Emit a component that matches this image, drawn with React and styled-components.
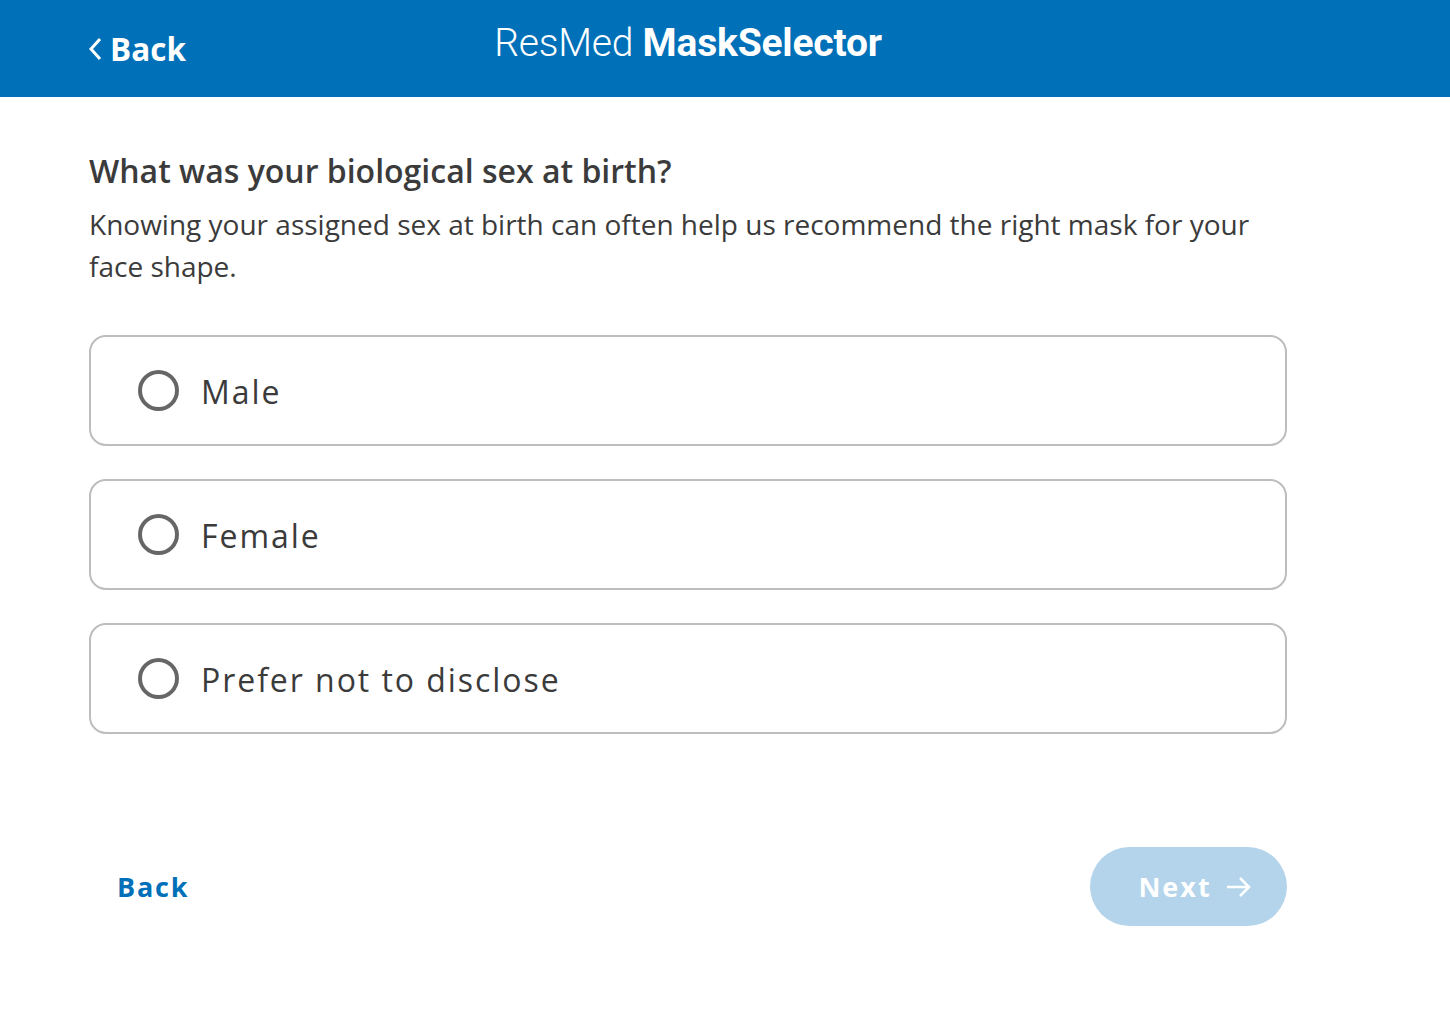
import React, { useState } from "react";
import styled, { createGlobalStyle } from "styled-components";

const Global = createGlobalStyle`
  html, body { margin: 0; padding: 0; background: #fff; }
  body { font-family: "Open Sans", "Liberation Sans", sans-serif; color: #333; }
  * { box-sizing: border-box; }
`;

const Header = styled.header`
  height: 97px;
  background: #0070b8;
  color: #fff;
`;

const HeaderInner = styled.div`
  width: 1198px;
  margin-left: 89px;
  height: 100%;
  display: grid;
  grid-template-columns: 1fr auto 1fr;
  align-items: center;
`;

const HeaderBack = styled.button`
  justify-self: start;
  background: none;
  border: 0;
  padding: 0;
  color: #fff;
  font-family: "Open Sans", sans-serif;
  font-weight: 700;
  font-size: 31.5px;
  display: flex;
  align-items: center;
  gap: 7px;
  cursor: pointer;
`;

const Title = styled.h1`
  margin: 0 0 11px 0;
  font-family: Roboto, "Liberation Sans", sans-serif;
  font-size: 39px;
  font-weight: 300;
  letter-spacing: -0.2px;
  white-space: nowrap;
  b { font-weight: 700; }
`;

const Main = styled.main`
  width: 1198px;
  margin-left: 89px;
  padding-top: 50px;
`;

const Question = styled.h2`
  margin: 0;
  font-size: 32px;
  font-weight: 600;
  color: #3b3b3b;
  line-height: 48px;
`;

const Help = styled.p`
  margin: 8px 0 0;
  font-size: 28px;
  line-height: 42px;
  color: #3b3b3b;
  padding-right: 10px;
`;

const Options = styled.div`
  margin-top: 48px;
  display: flex;
  flex-direction: column;
  gap: 33px;
`;

const Option = styled.label`
  height: 111px;
  border: 2px solid #bdbdbd;
  border-radius: 17px;
  display: flex;
  align-items: center;
  padding-left: 47px;
  gap: 22px;
  cursor: pointer;
  background: #fff;
`;

const Radio = styled.span`
  width: 41px;
  height: 41px;
  border-radius: 50%;
  border: 4px solid #666;
  flex: none;
  display: flex;
  align-items: center;
  justify-content: center;
  &::after {
    content: "";
    width: 19px;
    height: 19px;
    border-radius: 50%;
    background: ${(p) => (p.$checked ? "#0070b8" : "transparent")};
  }
`;

const Label = styled.span`
  font-size: 32px;
  letter-spacing: 1.95px;
  color: #3b3b3b;
  margin-top: 2px;
`;

const Footer = styled.div`
  margin-top: 113px;
  display: flex;
  justify-content: space-between;
  align-items: center;
`;

const BackLink = styled.button`
  background: none;
  border: 0;
  padding: 0 0 0 28px;
  font-family: "Open Sans", sans-serif;
  font-weight: 700;
  font-size: 27px;
  letter-spacing: 1.8px;
  color: #0070b8;
  cursor: pointer;
`;

const NextButton = styled.button`
  width: 197px;
  height: 79px;
  border-radius: 40px;
  border: 0;
  background: ${(p) => (p.disabled ? "#b3d4ea" : "#0070b8")};
  color: #fff;
  font-family: "Open Sans", sans-serif;
  font-weight: 700;
  font-size: 27px;
  letter-spacing: 2px;
  display: flex;
  align-items: center;
  justify-content: center;
  gap: 14px;
  padding-left: 19px;
`;

const options = ["Male", "Female", "Prefer not to disclose"];

export default function App() {
  const [sel, setSel] = useState(null);
  return (
    <>
      <Global />
      <Header>
        <HeaderInner>
          <HeaderBack>
            <svg width="14" height="26" viewBox="0 0 14 26" fill="none">
              <path d="M11 3 L2 13 L11 23" stroke="#fff" strokeWidth="3" />
            </svg>
            Back
          </HeaderBack>
          <Title>
            ResMed <b>MaskSelector</b>
          </Title>
          <span />
        </HeaderInner>
      </Header>
      <Main>
        <Question>What was your biological sex at birth?</Question>
        <Help>
          Knowing your assigned sex at birth can often help us recommend the right mask for your face shape.
        </Help>
        <Options>
          {options.map((o) => (
            <Option key={o} onClick={() => setSel(o)}>
              <Radio $checked={sel === o} />
              <Label>{o}</Label>
            </Option>
          ))}
        </Options>
        <Footer>
          <BackLink>Back</BackLink>
          <NextButton disabled={!sel}>
            Next
            <svg width="26" height="22" viewBox="0 0 26 22" fill="none">
              <path d="M1 11 H23 M14 2 L23 11 L14 20" stroke="#fff" strokeWidth="2.5" />
            </svg>
          </NextButton>
        </Footer>
      </Main>
    </>
  );
}
